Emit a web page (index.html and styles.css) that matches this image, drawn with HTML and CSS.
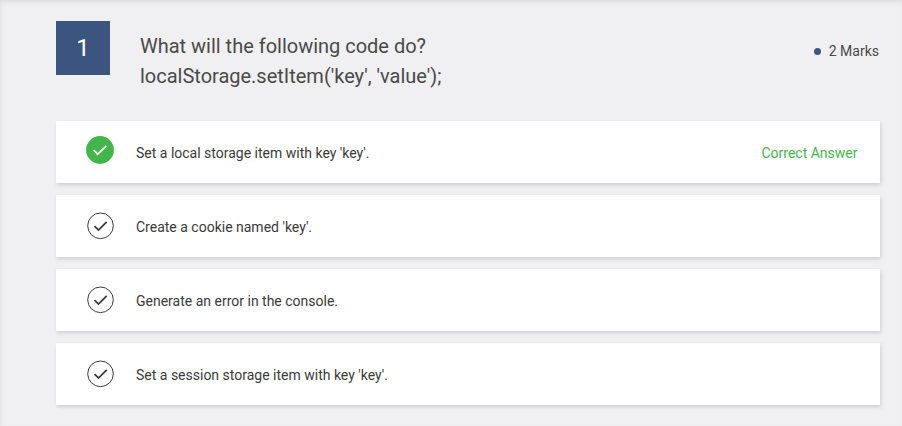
FILE: index.html
```html
<!DOCTYPE html>
<html lang="en">
<head>
<meta charset="utf-8">
<title>Quiz</title>
<link rel="stylesheet" href="styles.css">
</head>
<body>
<main class="quiz">
  <header class="question">
    <div class="number">1</div>
    <h1 class="title">What will the following code do?<br>localStorage.setItem('key', 'value');</h1>
    <div class="marks"><span class="dot"></span>2 Marks</div>
  </header>
  <ul class="answers">
    <li class="answer correct">
      <svg class="icon" viewBox="0 0 28 28"><circle class="disc" cx="14" cy="14" r="13.9"/><path class="tick" d="M7.7 14.2l4 4 8.6-8.3"/></svg>
      <span class="text">Set a local storage item with key 'key'.</span>
      <span class="label">Correct Answer</span>
    </li>
    <li class="answer">
      <svg class="icon" viewBox="0 0 28 28"><circle class="disc" cx="14.5" cy="13.8" r="12.8"/><path class="tick" d="M8.5 14.1l4 4 8.2-8.2"/></svg>
      <span class="text">Create a cookie named 'key'.</span>
    </li>
    <li class="answer">
      <svg class="icon" viewBox="0 0 28 28"><circle class="disc" cx="14.5" cy="13.8" r="12.8"/><path class="tick" d="M8.5 14.1l4 4 8.2-8.2"/></svg>
      <span class="text">Generate an error in the console.</span>
    </li>
    <li class="answer">
      <svg class="icon" viewBox="0 0 28 28"><circle class="disc" cx="14.5" cy="13.8" r="12.8"/><path class="tick" d="M8.5 14.1l4 4 8.2-8.2"/></svg>
      <span class="text">Set a session storage item with key 'key'.</span>
    </li>
  </ul>
</main>
</body>
</html>
```
FILE: styles.css
```css
* { box-sizing: border-box; }
body { margin: 0; font-family: Roboto, sans-serif; color: #3a3a3a; background: #f0f0f2; }
.quiz {
  height: 426px;
  padding: 21px 22px 0 56px;
  box-shadow: inset 0 5px 6px -4px rgba(0, 0, 0, .1), inset 5px 0 6px -4px rgba(0, 0, 0, .05);
}
.question { display: flex; align-items: flex-start; height: 100px; }
.number {
  width: 54px; height: 54px;
  background: #3b5580; color: #fff;
  font-size: 24px; line-height: 54px; text-align: center;
}
.title {
  flex: 1; margin: 10px 0 0 30px;
  font-size: 20px; font-weight: 400; line-height: 30px; color: #4a4a4a;
  letter-spacing: -.01px;
}
.marks {
  display: flex; align-items: center; gap: 8px;
  margin: 20px 1px 0 0;
  font-size: 14px; line-height: 20px; color: #4a4a4a;
}
.dot { width: 7px; height: 7px; border-radius: 50%; background: #3b5688; }
.answers { display: grid; gap: 12px; margin: 0; padding: 0; list-style: none; }
.answer {
  display: flex; align-items: center;
  height: 62px; padding: 0 22.5px 0 30px;
  background: #fff; box-shadow: 1px 2px 4px rgba(0, 0, 0, .14);
  font-size: 14px; line-height: 20px;
}
.icon { width: 28px; height: 28px; margin-right: 22px; }
.disc { fill: none; stroke: #3a3a3a; stroke-width: 1; }
.tick { fill: none; stroke: #3a3a3a; stroke-width: 1.8; }
.text { flex: 1; padding-top: 2px; }
.correct .icon { margin-top: -4px; }
.correct .disc { fill: #43b649; stroke: none; }
.correct .tick { stroke: #fff; }
.label { padding-top: 2px; color: #43b649; }
```
